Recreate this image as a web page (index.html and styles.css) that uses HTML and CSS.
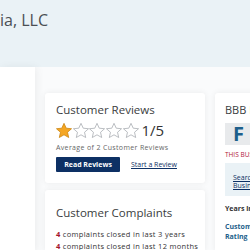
FILE: index.html
```html
<!DOCTYPE html>
<html>
<head>
<meta charset="utf-8">
<link rel="stylesheet" href="styles.css">
</head>
<body>
<header class="hero">
  <h1 class="biz-name">ia, LLC</h1>
</header>
<main class="layout">
  <aside class="side-card"></aside>
  <section class="mid-col">
    <div class="card reviews">
      <h2 class="card-title">Customer Reviews</h2>
      <div class="stars-row">
        <svg class="star" viewBox="1.6 1.8 20.8 19.4"><path class="filled" d="M12 2.2l2.9 6.3 6.9.7-5.2 4.6 1.5 6.8L12 17.1l-6.1 3.5 1.5-6.8-5.2-4.6 6.9-.7z"/></svg>
        <svg class="star" viewBox="1.6 1.8 20.8 19.4"><path class="empty" d="M12 2.2l2.9 6.3 6.9.7-5.2 4.6 1.5 6.8L12 17.1l-6.1 3.5 1.5-6.8-5.2-4.6 6.9-.7z"/></svg>
        <svg class="star" viewBox="1.6 1.8 20.8 19.4"><path class="empty" d="M12 2.2l2.9 6.3 6.9.7-5.2 4.6 1.5 6.8L12 17.1l-6.1 3.5 1.5-6.8-5.2-4.6 6.9-.7z"/></svg>
        <svg class="star" viewBox="1.6 1.8 20.8 19.4"><path class="empty" d="M12 2.2l2.9 6.3 6.9.7-5.2 4.6 1.5 6.8L12 17.1l-6.1 3.5 1.5-6.8-5.2-4.6 6.9-.7z"/></svg>
        <svg class="star" viewBox="1.6 1.8 20.8 19.4"><path class="empty" d="M12 2.2l2.9 6.3 6.9.7-5.2 4.6 1.5 6.8L12 17.1l-6.1 3.5 1.5-6.8-5.2-4.6 6.9-.7z"/></svg>
        <span class="score">1/5</span>
      </div>
      <p class="avg">Average of 2 Customer Reviews</p>
      <div class="actions">
        <a class="btn">Read Reviews</a>
        <a class="link">Start a Review</a>
      </div>
    </div>
    <div class="card complaints">
      <h2 class="card-title">Customer Complaints</h2>
      <p class="stat"><b>4</b> complaints closed in last 3 years</p>
      <p class="stat"><b>4</b> complaints closed in last 12 months</p>
    </div>
  </section>
  <section class="card rating">
    <h2 class="rating-title">BBB Rating &amp; Accreditation</h2>
    <div class="grade">F</div>
    <p class="not-acc">THIS BUSINESS IS NOT BBB ACCREDITED</p>
    <div class="search-box">
      <a class="link">Search for Accredited</a>
      <a class="link">Businesses in this category</a>
    </div>
    <p class="years">Years in Business: 4</p>
    <p class="cust">Customer Reviews are not used in the calculation of BBB Rating</p>
  </section>
</main>
</body>
</html>
```

FILE: styles.css
```css
* { box-sizing: border-box; }
html, body { margin: 0; padding: 0; }
body {
  width: 250px;
  height: 250px;
  overflow: hidden;
  background: #fafbfc;
  font-family: "Open Sans", "Liberation Sans", sans-serif;
  color: #333;
}
.hero {
  background: #eaf2f6;
  height: 67px;
  padding-top: 10px;
  overflow: hidden;
}
.biz-name {
  margin: 0;
  font-weight: 400;
  font-size: 16px;
  line-height: 20px;
  color: #4b4f54;
  white-space: nowrap;
}
.layout {
  display: grid;
  grid-template-columns: 35px 160px 60px;
  column-gap: 10px;
  padding-top: 26px;
  height: 183px;
}
.side-card {
  background: #fff;
  margin-top: -26px;
  box-shadow: 2px 0 8px rgba(0,0,0,0.06);
}
.mid-col {
  display: flex;
  flex-direction: column;
  gap: 7px;
}
.card {
  background: #fff;
  border-radius: 3px;
  box-shadow: 0 0 6px rgba(0,0,0,0.07);
}
.reviews { padding: 9px 10px 10px 11px; height: 90px; }
.card-title {
  margin: 0;
  font-size: 11.5px;
  font-weight: 400;
  line-height: 16px;
  color: #3a3d40;
  white-space: nowrap;
}
.stars-row {
  display: flex;
  align-items: center;
  margin-top: 4px;
  height: 17px;
}
.star { width: 16px; height: 15px; margin-right: 0.7px; }
.filled { fill: #f5a623; stroke: #c98410; stroke-width: 1; }
.empty { fill: #fff; stroke: #a6aaaf; stroke-width: 1; }
.score { font-size: 15px; margin-left: 2px; color: #333; line-height: 17px; }
.avg {
  margin: 4px 0 0;
  font-size: 7px;
  letter-spacing: 0.35px;
  line-height: 9px;
  color: #666;
  white-space: nowrap;
}
.actions {
  display: flex;
  align-items: center;
  margin-top: 5px;
  gap: 11px;
}
.btn {
  display: block;
  background: #0d3064;
  color: #fff;
  font-weight: 700;
  font-size: 7px;
  width: 64px;
  height: 15px;
  line-height: 15px;
  text-align: center;
  border-radius: 1px;
}
.link {
  color: #0d3064;
  font-size: 7px;
  text-decoration: underline;
  white-space: nowrap;
  line-height: 8px;
}
.complaints { padding: 15px 10px 0 11px; flex: 1; }
.stat {
  margin: 0;
  font-size: 7.5px;
  letter-spacing: 0.3px;
  line-height: 12px;
  color: #333;
  white-space: nowrap;
}
.complaints .card-title { margin-bottom: 7px; }
.stat b { color: #a3152b; font-weight: 700; }
.rating { padding: 9px 0 0 10px; overflow: hidden; }
.rating-title {
  margin: 0;
  font-size: 11px;
  font-weight: 400;
  line-height: 16px;
  white-space: nowrap;
  color: #3a3d40;
}
.grade {
  margin-top: 5px;
  width: 40px;
  height: 22px;
  background: #e8eaec;
  color: #1d5f8b;
  font-weight: 700;
  font-size: 20px;
  line-height: 22px;
  padding-left: 8px;
}
.not-acc {
  margin: 5px 0 0;
  font-size: 6.5px;
  line-height: 9px;
  color: #b1203b;
  white-space: nowrap;
}
.search-box {
  margin-top: 4px;
  background: #eaf2f6;
  height: 33px;
  padding: 11px 0 0 8px;
  display: flex;
  flex-direction: column;
}
.years {
  margin: 8px 0 0;
  font-size: 7px;
  font-weight: 700;
  white-space: nowrap;
  line-height: 9px;
}
.cust {
  margin: 9px 0 0;
  font-size: 7px;
  font-weight: 700;
  color: #1d5f8b;
  line-height: 10px;
  width: 200px;
}
```
